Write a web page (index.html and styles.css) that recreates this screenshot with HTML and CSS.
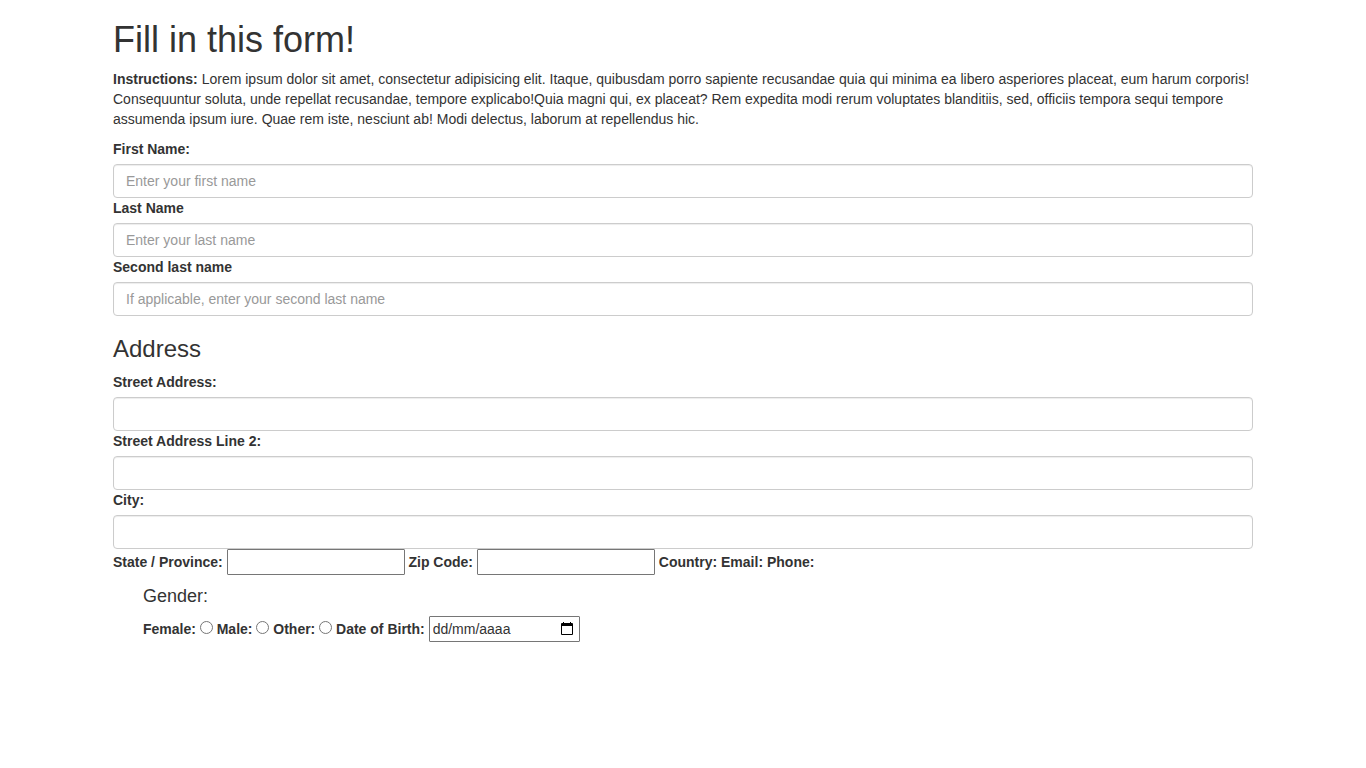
FILE: index.html
```html
<!DOCTYPE html>
<html lang="en">
<head>
<meta charset="utf-8">
<title>Fill in this form!</title>
<link rel="stylesheet" href="styles.css">
</head>
<body>
<main class="container">
<h1>Fill in this form!</h1>
<p class="intro"><strong>Instructions:</strong> Lorem ipsum dolor sit amet, consectetur adipisicing elit. Itaque, quibusdam porro sapiente recusandae quia qui minima ea libero asperiores placeat, eum harum corporis! Consequuntur soluta, unde repellat recusandae, tempore explicabo!Quia magni qui, ex placeat? Rem expedita modi rerum voluptates blanditiis, sed, officiis tempora sequi tempore assumenda ipsum iure. Quae rem iste, nesciunt ab! Modi delectus, laborum at repellendus hic.</p>
<form>
<label for="first">First Name:</label>
<input class="form-control" id="first" type="text" placeholder="Enter your first name">
<label for="last">Last Name</label>
<input class="form-control" id="last" type="text" placeholder="Enter your last name">
<label for="second">Second last name</label>
<input class="form-control" id="second" type="text" placeholder="If applicable, enter your second last name">
<h3>Address</h3>
<label for="street">Street Address:</label>
<input class="form-control" id="street" type="text">
<label for="street2">Street Address Line 2:</label>
<input class="form-control" id="street2" type="text">
<label for="city">City:</label>
<input class="form-control" id="city" type="text">
<div class="region">
<label for="state">State / Province:</label>
<input class="plain" id="state" type="text">
<label for="zip">Zip Code:</label>
<input class="plain" id="zip" type="text">
<label>Country:</label>
<label>Email:</label>
<label>Phone:</label>
</div>
<div class="personal">
<h4>Gender:</h4>
<label for="female">Female:</label>
<input class="choice" id="female" name="gender" type="radio">
<label for="male">Male:</label>
<input class="choice" id="male" name="gender" type="radio">
<label for="other">Other:</label>
<input class="choice" id="other" name="gender" type="radio">
<label for="birth">Date of Birth:</label>
<span class="date"><input class="plain" id="birth" type="text" value="dd/mm/aaaa"><button class="picker" type="button" aria-label="Choose date"><svg width="14" height="14" viewBox="0 0 14 14"><path fill="#000" fill-rule="evenodd" d="M3 0h1v1h6V0h1v1h1q1 0 1 1v10q0 1-1 1H2q-1 0-1-1V2q0-1 1-1h1zM2 4v8h10V4z"/></svg></button></span>
</div>
</form>
</main>
</body>
</html>
```
FILE: styles.css
```css
* { box-sizing: border-box; }
body {
  margin: 0;
  font-family: "Liberation Sans", Arial, sans-serif;
  font-size: 14px;
  line-height: 20px;
  color: #333;
  background: #fff;
}
.container {
  max-width: 1170px;
  margin: 0 auto;
  padding: 0 15px;
}
h1, h3, h4 { font-weight: 500; margin: 20px 0 10px; }
h1 { font-size: 36px; line-height: 39px; }
h3 { font-size: 24px; line-height: 26px; }
h4 { font-size: 18px; line-height: 19px; margin: 10px 0; }
.intro { margin: 0 0 10px; }
label { display: inline-block; margin-bottom: 5px; font-weight: 700; }
input { font: inherit; color: inherit; }
.form-control {
  display: block;
  width: 100%;
  height: 34px;
  padding: 6px 12px;
  border: 1px solid #ccc;
  border-radius: 4px;
  background: #fff;
  color: #555;
  box-shadow: inset 0 1px 1px rgba(0, 0, 0, .075);
}
.form-control::placeholder { color: #999; opacity: 1; }
.plain {
  width: 178px;
  height: 26px;
  padding: 1px 3px;
  border: 1px solid #767676;
  border-radius: 1px;
  background: #fff;
}
.personal { padding-left: 30px; }
.choice { width: 13px; height: 13px; margin: 4px 0 0; }
.date { display: inline-flex; width: 151px; height: 26px; border: 1px solid #767676; border-radius: 1px; }
.date .plain { flex: 1; min-width: 0; height: 24px; border: 0; }
.picker { display: flex; align-items: center; padding: 0 5px; border: 0; background: none; }
```
